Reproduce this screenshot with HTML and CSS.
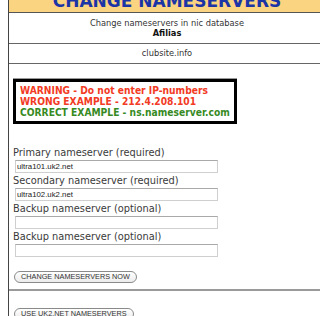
FILE: index.html
```html
<!DOCTYPE html>
<html>
<head>
<meta charset="utf-8">
<link rel="stylesheet" href="styles.css">
</head>
<body>
<div class="page">
  <div class="head"><span class="title">CHANGE NAMESERVERS</span></div>
  <div class="row info">
    <div>Change nameservers in nic database</div>
    <div class="strong">Afilias</div>
  </div>
  <div class="row domain">clubsite.info</div>
  <div class="row formrow">
    <div class="warn">
      <div class="red">WARNING - Do not enter IP-numbers</div>
      <div class="red">WRONG EXAMPLE - 212.4.208.101</div>
      <div class="green">CORRECT EXAMPLE - ns.nameserver.com</div>
    </div>
    <div class="fields">
      <label class="lbl">Primary nameserver (required)</label>
      <input class="inp" type="text" value="ultra101.uk2.net">
      <label class="lbl">Secondary nameserver (required)</label>
      <input class="inp" type="text" value="ultra102.uk2.net">
      <label class="lbl">Backup nameserver (optional)</label>
      <input class="inp" type="text" value="">
      <label class="lbl">Backup nameserver (optional)</label>
      <input class="inp" type="text" value="">
    </div>
    <div class="btnwrap"><button class="btn" type="button">CHANGE NAMESERVERS NOW</button></div>
  </div>
  <div class="row userow">
    <button class="btn" type="button">USE UK2.NET NAMESERVERS</button>
  </div>
</div>
</body>
</html>
```

FILE: styles.css
```css
html, body {
  margin: 0;
  padding: 0;
  overflow: hidden;
  background: #fff;
}
body {
  width: 320px;
  height: 316px;
}
.page {
  margin-left: 8px;
  width: 316px;
  border-left: 1px solid #444;
  font-family: "DejaVu Sans Condensed", "DejaVu Sans", sans-serif;
  font-stretch: condensed;
  color: #333;
}
.head {
  height: 12px;
  background: #fbd481;
  border-bottom: 1px solid #555;
  display: flex;
  justify-content: center;
  align-items: flex-end;
  overflow: hidden;
}
.title {
  font-family: "DejaVu Sans", sans-serif;
  font-stretch: normal;
  font-weight: bold;
  font-size: 17px;
  line-height: 17px;
  margin-bottom: 2px;
  color: #1b35a6;
}
.row {
  border-bottom: 1px solid #666;
}
.info {
  padding: 5px 0;
  text-align: center;
  font-size: 9.2px;
  line-height: 10px;
}
.strong {
  font-weight: bold;
  color: #111;
}
.domain {
  padding: 4px 0 5px;
  text-align: center;
  font-size: 9.2px;
  line-height: 10px;
}
.formrow {
  padding: 15px 0 6px 4px;
  border-bottom: 2px solid #9a9a9a;
}
.warn {
  display: inline-block;
  vertical-align: top;
  border: 3px solid #000;
  box-shadow: 0 -1px 0 #999;
  padding: 3px 4px;
  font-weight: bold;
  font-size: 10.2px;
  line-height: 11px;
}
.red {
  color: #f23a24;
}
.green {
  color: #378a1f;
}
.fields {
  margin-top: 23px;
  display: flex;
  flex-direction: column;
  align-items: flex-start;
}
.lbl {
  font-size: 10.9px;
  line-height: 12px;
  color: #3a3a3a;
}
.inp {
  box-sizing: border-box;
  width: 203px;
  height: 13px;
  margin: 1px 0 2px 2px;
  padding: 0 1px;
  border: 1px solid #cfcfcf;
  border-top-color: #a9a9a9;
  background: #fff;
  font-family: "Liberation Sans", Arial, sans-serif;
  font-stretch: normal;
  font-size: 7.8px;
  color: #222;
  outline: none;
}
.btnwrap {
  margin-top: 12px;
  display: flex;
}
.btn {
  box-sizing: border-box;
  height: 12px;
  margin: 0 0 0 1px;
  padding: 0 6px;
  border: 1px solid #8a8a8a;
  border-radius: 6px;
  background: linear-gradient(#ffffff, #ececec);
  font-family: "Liberation Sans", Arial, sans-serif;
  font-stretch: normal;
  font-size: 7.3px;
  line-height: 10px;
  color: #333;
}
.userow {
  border-bottom: none;
  display: flex;
  padding: 17px 0 0 4px;
}
```
